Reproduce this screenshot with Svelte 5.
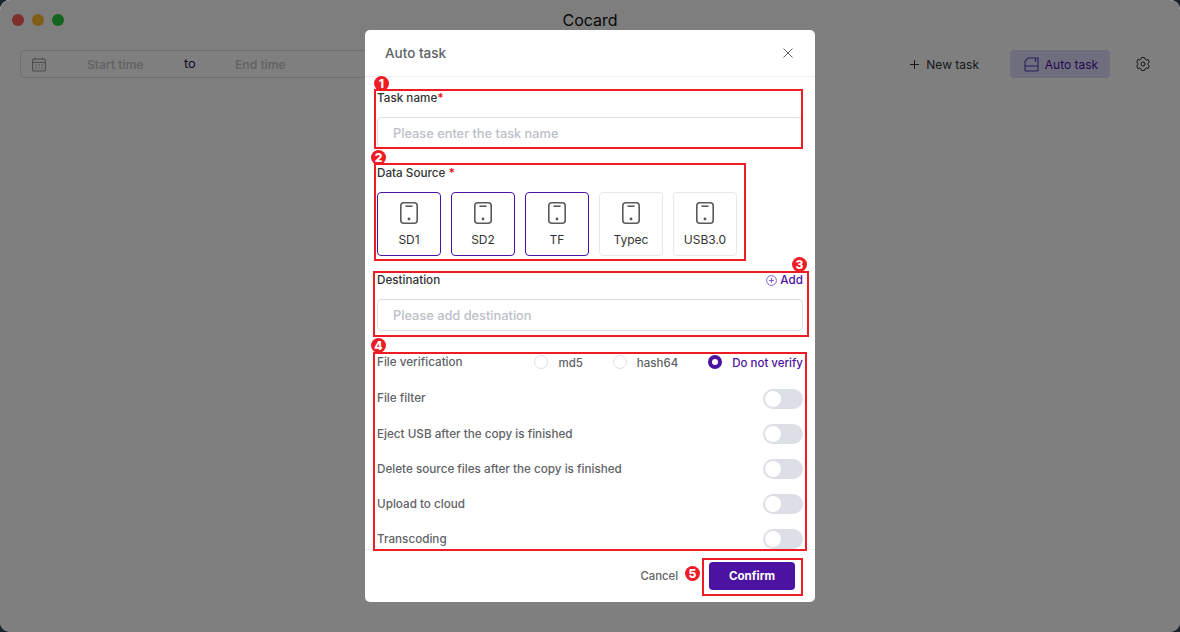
<script>
  const sources = [
    { name: 'SD1', on: true },
    { name: 'SD2', on: true },
    { name: 'TF', on: true },
    { name: 'Typec', on: false },
    { name: 'USB3.0', on: false }
  ];
  const toggles = ['File filter', 'Eject USB after the copy is finished', 'Delete source files after the copy is finished', 'Upload to cloud', 'Transcoding'];
  const radios = [
    { name: 'md5', on: false },
    { name: 'hash64', on: false },
    { name: 'Do not verify', on: true }
  ];
</script>

<div class="window">
  <header class="titlebar">
    <div class="lights"><i class="red"></i><i class="amber"></i><i class="green"></i></div>
    <div class="title">Cocard</div>
  </header>
  <div class="toolbar">
    <div class="range">
      <svg class="cal" width="14" height="15" viewBox="0 0 14 15" fill="none" stroke="#9a9a9a" stroke-width="1.1">
        <rect x=".6" y="2" width="12.8" height="12" rx="1" />
        <path d="M.6 5.5h12.8M3.5 .8v2.4M10.5 .8v2.4" />
        <path d="M3.3 8h1.5M6.3 8h1.5M9.3 8h1.5M3.3 11h1.5M6.3 11h1.5M9.3 11h1.5" />
      </svg>
      <span class="start">Start time</span>
      <span class="to">to</span>
      <span class="end">End time</span>
    </div>
    <div class="actions">
      <button class="new">
        <svg width="11" height="11" viewBox="0 0 11 11" stroke="#333" stroke-width="1" fill="none"><path d="M5.5 1v9M1 5.5h9" /></svg>
        New task
      </button>
      <button class="auto">
        <svg width="15" height="15" viewBox="0 0 15 15" fill="none" stroke="#4a3fb5" stroke-width="1.1">
          <path d="M4 1h10v12.5a.5.5 0 0 1-.5.5h-12a.5.5 0 0 1-.5-.5V4.5Z" />
          <path d="M1 9h13M11.5 1v4" />
        </svg>
        Auto task
      </button>
      <svg class="gear" width="14" height="14" viewBox="0 0 14 14" fill="none" stroke="#333" stroke-width="1">
        <path d="M5.5 1h3l.5 1.6 1.5.8 1.6-.4 1.2 2.5-1.1 1.2v1.6l1.1 1.2-1.2 2.5-1.6-.4-1.5.8-.5 1.6h-3L5 12.4l-1.5-.8-1.6.4L.7 9.5l1.1-1.2V6.7L.7 5.5l1.2-2.5 1.6.4L5 2.6Z" transform="translate(0 -.5)" />
        <circle cx="7" cy="7" r="2" />
      </svg>
    </div>
  </div>

  <div class="overlay">
    <section class="modal">
      <div class="head">
        <h2>Auto task</h2>
        <svg width="10" height="10" viewBox="0 0 10 10" stroke="#666" stroke-width="1" fill="none"><path d="M.5.5l9 9M9.5.5l-9 9" /></svg>
      </div>

      <div class="body">
        <div class="group g1">
          <span class="ann box"></span><span class="ann num">1</span>
          <div class="label">Task name<em>*</em></div>
          <div class="field">Please enter the task name</div>
        </div>

        <div class="group g2">
          <span class="ann box"></span><span class="ann num">2</span>
          <div class="label">Data Source <em>*</em></div>
          <div class="cards">
            {#each sources as s}
              <div class="card" class:on={s.on}>
                <svg width="18" height="22" viewBox="0 0 18 22" fill="none" stroke="#5a5a5a" stroke-width="1.6">
                  <rect x=".8" y=".8" width="16.4" height="20.4" rx="3" />
                  <path d="M5.5 4.2h7" />
                  <circle cx="9" cy="17" r="1.4" fill="#5a5a5a" stroke="none" />
                </svg>
                <span>{s.name}</span>
              </div>
            {/each}
          </div>
        </div>

        <div class="group g3">
          <span class="ann box"></span><span class="ann num">3</span>
          <div class="label spread">
            Destination
            <span class="add">
              <svg width="11" height="11" viewBox="0 0 11 11" fill="none" stroke="#7a4fc4" stroke-width=".9">
                <circle cx="5.5" cy="5.5" r="4.9" /><path d="M5.5 3v5M3 5.5h5" />
              </svg>
              Add
            </span>
          </div>
          <div class="field">Please add destination</div>
        </div>

        <div class="group g4">
          <span class="ann box"></span><span class="ann num">4</span>
          <div class="row verify">
            <span class="rowtext">File verification</span>
            <div class="radios">
              {#each radios as r}
                <div class="radio" class:on={r.on}><i></i><span>{r.name}</span></div>
              {/each}
            </div>
          </div>
          {#each toggles as t, i}
            <div class="row" class:first={i === 0}>
              <span class="rowtext">{t}</span>
              <span class="switch"></span>
            </div>
          {/each}
        </div>
      </div>

      <div class="foot">
        <span class="cancel">Cancel</span>
        <button class="confirm">
          Confirm
          <span class="ann box"></span><span class="ann num">5</span>
        </button>
      </div>
    </section>
  </div>
</div>

<style>
  :global(body) {
    margin: 0;
    background: #1c2430;
    font-family: Inter, "Liberation Sans", sans-serif;
  }
  .window {
    position: relative;
    width: 1180px;
    height: 632px;
    background: #fff;
    border-radius: 10px;
    overflow: hidden;
    color: #333;
  }
  .titlebar {
    height: 40px;
    background: #fcfcfc;
    display: flex;
    align-items: center;
    justify-content: center;
    position: relative;
  }
  .lights {
    position: absolute;
    left: 12px;
    top: 14px;
    display: flex;
    gap: 8px;
  }
  .lights i { width: 12px; height: 12px; border-radius: 50%; }
  .red { background: #ff6058; }
  .amber { background: #ffbd2e; }
  .green { background: #28c940; }
  .title { font-size: 16px; color: #111; }

  .toolbar {
    display: flex;
    justify-content: space-between;
    padding: 10px 30px 0 20px;
  }
  .range {
    width: 500px;
    height: 28px;
    box-sizing: border-box;
    border: 1px solid #dcdfe6;
    border-radius: 4px;
    display: flex;
    align-items: center;
    font-size: 12.2px;
    font-weight: 500;
    color: #c0c4cc;
  }
  .cal { margin-left: 11px; }
  .start { margin-left: 41px; width: 97px; }
  .to { color: #14204a; width: 51px; margin-top: -2px; font-weight: 400; font-size: 12.8px; }
  .actions { display: flex; align-items: center; }
  button {
    font: inherit;
    border: 0;
    background: none;
    padding: 0;
  }
  .new {
    display: flex;
    align-items: center;
    gap: 6px;
    font-size: 12px;
    font-weight: 400;
    color: #333;
    margin-right: 31px;
  }
  .auto {
    width: 100px;
    height: 28px;
    padding-left: 2px;
    border-radius: 4px;
    background: #dcdcfc;
    color: #4c12a1;
    font-size: 12px;
    font-weight: 400;
    display: flex;
    align-items: center;
    justify-content: center;
    gap: 6px;
    margin-right: 26px;
  }

  .overlay {
    position: absolute;
    inset: 0;
    background: rgba(0, 0, 0, 0.5);
    display: flex;
    justify-content: center;
    padding-top: 30px;
    box-sizing: border-box;
  }
  .modal {
    width: 450px;
    height: 572px;
    background: #fff;
    border-radius: 5px;
    display: flex;
    flex-direction: column;
  }
  .head {
    height: 46px;
    flex: none;
    border-bottom: 1px solid #ebeef5;
    display: flex;
    align-items: center;
    justify-content: space-between;
    padding: 0 22px 0 20px;
  }
  h2 { margin: 0 0 1px; font-size: 13.5px; font-weight: 500; color: #606266; }
  .body {
    flex: 1;
    padding: 0 12px;
    font-size: 11.7px;
    color: #333;
  }
  .group { position: relative; }
  .g1 { margin-top: 11px; }
  .g2 { margin-top: 14px; }
  .g3 { margin-top: 14px; }
  .g4 { margin-top: 21px; }

  .label { height: 20px; line-height: 20px; font-size: 11.7px; font-weight: 500; }
  .label em { color: #e8141c; font-style: normal; font-weight: 700; }
  .spread { display: flex; justify-content: space-between; }
  .field {
    margin-top: 9px;
    height: 32px;
    box-sizing: border-box;
    border: 1px solid #dcdfe6;
    border-radius: 4px;
    line-height: 32px;
    padding-left: 15px;
    font-size: 12.8px;
    font-weight: 500;
    color: #bcc0c8;
  }
  .add { display: flex; align-items: center; gap: 3px; color: #4c12a1; }

  .cards { display: flex; gap: 10px; margin-top: 9px; }
  .card {
    width: 64px;
    height: 64px;
    box-sizing: border-box;
    border: 1px solid #e4e7ed;
    border-radius: 4px;
    display: flex;
    flex-direction: column;
    align-items: center;
    padding-top: 9px;
    gap: 6px;
    font-size: 12px;
    font-weight: 400;
    color: #333;
  }
  .card.on { border-color: #4c12a1; }
  .card span { line-height: 20px; }

  .row {
    height: 20px;
    display: flex;
    justify-content: space-between;
    align-items: center;
    margin-bottom: 15px;
    color: #606266;
    font-weight: 500;
  }
  .rowtext { margin-bottom: 1px; }
  .first .rowtext { margin-bottom: 2px; }
  .row:last-child { margin-bottom: 0; }
  .verify { margin-bottom: 17px; }
  .radios { display: flex; gap: 30px; font-size: 11.5px; }
  .radio { display: flex; align-items: center; gap: 10px; }
  .radio span { margin-top: 1px; }
  .radio i {
    width: 14px;
    height: 14px;
    box-sizing: border-box;
    border: 1px solid #dcdfe6;
    border-radius: 50%;
  }
  .radio.on { color: #4c12a1; }
  .radio.on i { border: 4.5px solid #4c12a1; background: #fff; }
  .switch {
    width: 40px;
    height: 20px;
    border-radius: 10px;
    background: #dcdfe6;
    position: relative;
  }
  .switch::after {
    content: "";
    position: absolute;
    left: 2px;
    top: 2px;
    width: 16px;
    height: 16px;
    border-radius: 50%;
    background: #fff;
  }

  .foot {
    height: 53px;
    flex: none;
    box-sizing: border-box;
    border-top: 1px solid #ebeef5;
    display: flex;
    justify-content: flex-end;
    align-items: flex-start;
    padding: 12px 20px 0 0;
    gap: 31px;
    font-size: 11.3px;
  }
  .cancel { line-height: 28px; color: #606266; font-weight: 500; }
  .confirm {
    position: relative;
    width: 86px;
    height: 28px;
    background: #4c12a1;
    color: #fff;
    border-radius: 4px;
    font-size: 11.6px;
    font-weight: 700;
  }

  .ann { position: absolute; }
  .box { border: 2px solid #ee1c25; box-sizing: border-box; }
  .num {
    width: 15px;
    height: 15px;
    border-radius: 50%;
    background: #ee1c25;
    color: #fff;
    font-size: 12px;
    line-height: 15px;
    font-weight: 800;
    text-align: center;
  }
  .g1 .box { left: -3px; top: 1px; width: 429px; height: 60px; }
  .g1 .num { left: -3px; top: -12px; }
  .g2 .box { left: -3px; top: 0; width: 372px; height: 98px; }
  .g2 .num { left: -6px; top: -13px; }
  .g3 .box { left: -4px; top: 1px; width: 436px; height: 66px; }
  .g3 .num { left: 415px; top: -13px; }
  .g4 .box { left: -4px; top: 0; width: 434px; height: 199px; }
  .g4 .num { left: -6px; top: -14px; }
  .confirm .box { left: -7px; top: -4px; width: 101px; height: 38px; }
  .confirm .num { left: -24px; top: 4px; }
</style>
